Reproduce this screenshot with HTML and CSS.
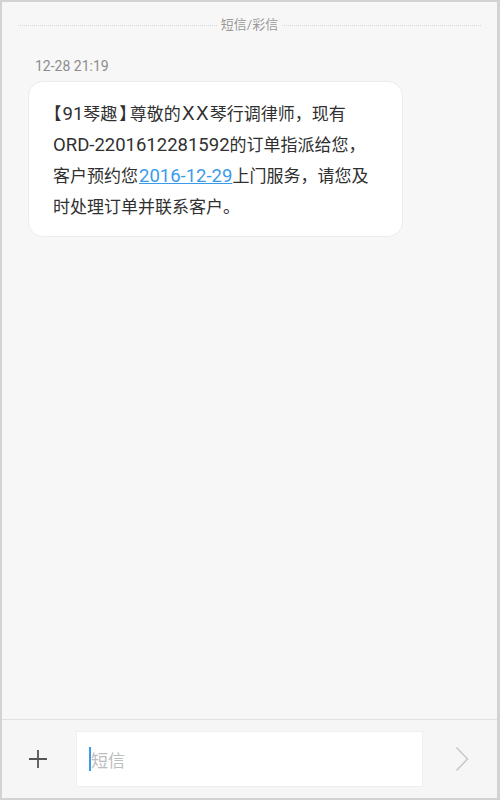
FILE: index.html
```html
<!DOCTYPE html>
<html lang="zh">
<head>
<meta charset="utf-8">
<title>短信</title>
<link rel="stylesheet" href="styles.css">
</head>
<body>
<div class="app">
  <main class="thread">
    <div class="divider"><span class="divider-label">短信/彩信</span></div>
    <div class="time">12-28 21:19</div>
    <div class="bubble">
      <p class="msg"><span class="br">【</span><span class="lat">91</span>琴趣<span class="br br-close">】</span>尊敬的<span class="lat wide">XX</span>琴行调律师，现有<br><span class="lat">ORD-2201612281592</span>的订单指派给您，<br>客户预约您<a class="link lat" href="#">2016-12-29</a>上门服务，请您及<br>时处理订单并联系客户。</p>
    </div>
  </main>
  <footer class="composer">
    <span class="plus">
      <svg width="20" height="20" viewBox="0 0 20 20"><path d="M10 1V19M1 10H19" stroke="#555" stroke-width="1.8" fill="none"/></svg>
    </span>
    <div class="input"><span class="cursor"></span><span class="placeholder">短信</span></div>
    <span class="send">
      <svg width="14" height="26" viewBox="0 0 14 26"><path d="M1.5 1.5L12.5 13L1.5 24.5" stroke="#c8c8c8" stroke-width="1.5" fill="none"/></svg>
    </span>
  </footer>
</div>
</body>
</html>
```

FILE: styles.css
```css
* { box-sizing: border-box; }
html, body { margin: 0; padding: 0; }
body {
  font-family: Roboto, "Noto Sans CJK SC", sans-serif;
  background: #fff;
}
.app {
  width: 500px;
  height: 800px;
  border: 2px solid #d3d3d3;
  border-right-width: 3px;
  background: #f7f7f7;
  display: flex;
  flex-direction: column;
}
.thread {
  flex: 1;
  padding: 13px 16px 0 16px;
}
.divider {
  display: flex;
  align-items: center;
  gap: 4px;
  color: #999;
  font-size: 13px;
  line-height: 20px;
}
.divider::before, .divider::after {
  content: "";
  flex: 1;
  border-top: 1px dotted #d6d6d6;
}
.time {
  margin-top: 21px;
  padding-left: 17px;
  font-size: 14px;
  line-height: 20px;
  color: #8c8c8c;
}
.bubble {
  margin-top: 5px;
  margin-left: 10px;
  width: 375px;
  background: #fff;
  border: 1px solid #ececec;
  border-radius: 15px;
  padding: 17px 10px 13px 24px;
}
.msg {
  margin: 0;
  font-size: 17px;
  line-height: 31px;
  color: #303030;
  white-space: nowrap;
}
.br {
  font-feature-settings: "halt" 1;
  margin-right: 1px;
}
.br-close {
  margin-left: 2px;
  margin-right: 2px;
}
.lat {
  font-size: 18.5px;
  line-height: 1;
}
.wide {
  font-family: "DejaVu Sans", Roboto, sans-serif;
  font-size: 19px;
  letter-spacing: 1px;
  margin-left: 1px;
}
.link {
  color: #3a9bea;
  text-decoration: underline;
  margin-left: 1px;
}
.composer {
  height: 79px;
  border-top: 1px solid #e2e2e2;
  background: #f6f6f6;
  display: flex;
  align-items: center;
  padding: 0 0 0 26px;
}
.plus {
  width: 20px;
  height: 20px;
  display: flex;
}
.input {
  margin-left: 28px;
  width: 347px;
  height: 56px;
  background: #fff;
  border: 1px solid #efefef;
  display: flex;
  align-items: center;
  padding-left: 12px;
}
.cursor {
  width: 2px;
  height: 24px;
  background: #3a9bea;
}
.placeholder {
  font-size: 17px;
  color: #bdbdbd;
}
.send {
  margin-left: 32px;
  display: flex;
}
```
